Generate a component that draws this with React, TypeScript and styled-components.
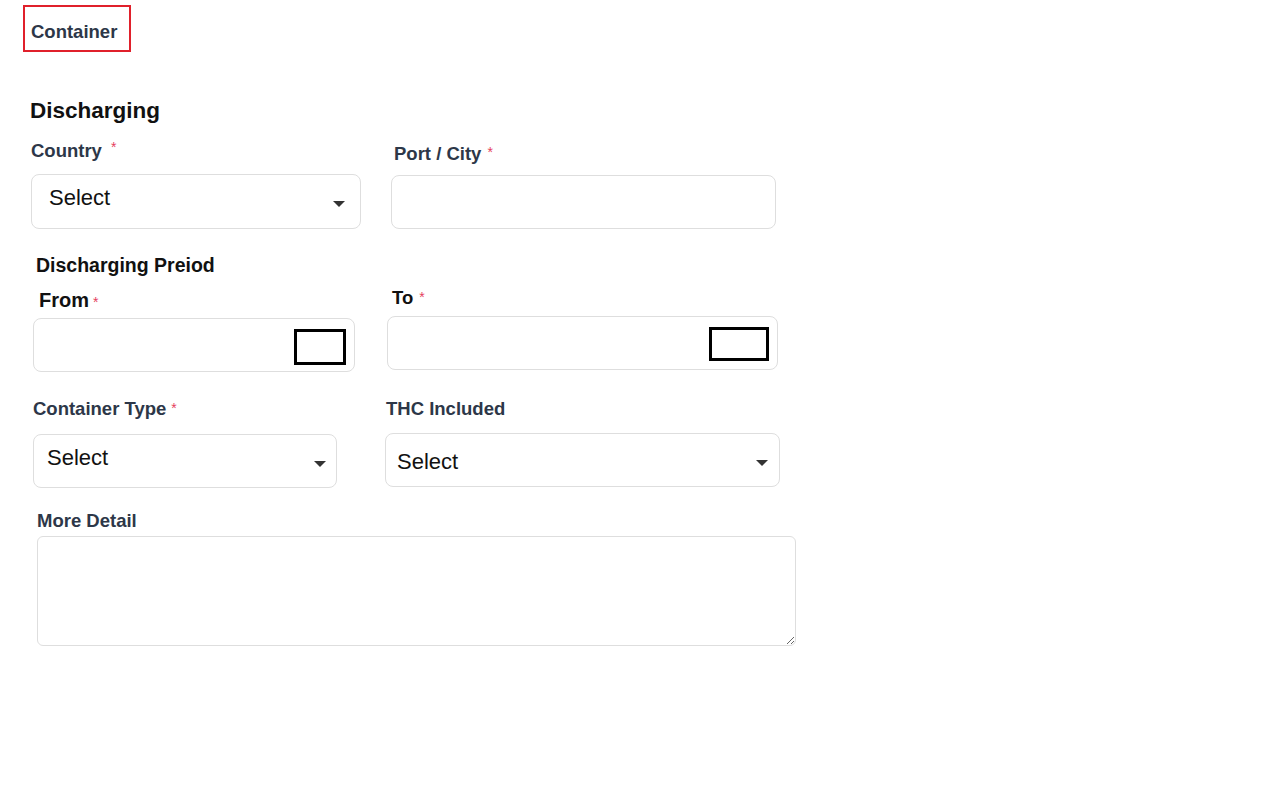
import React from "react";
import styled, { createGlobalStyle } from "styled-components";

const GlobalStyle = createGlobalStyle`
  html, body {
    margin: 0;
    padding: 0;
    background: #fff;
  }
  body {
    font-family: "Liberation Sans", Arial, sans-serif;
  }
  * {
    box-sizing: border-box;
  }
`;

const Page = styled.div`
  width: 1280px;
  min-height: 805px;
  padding-top: 5px;
`;

const Tab = styled.div`
  margin-left: 23px;
  width: 108px;
  height: 47px;
  border: 2px solid #e0202b;
  padding: 14px 0 0 6px;
  font-size: 18.5px;
  line-height: 21px;
  font-weight: 700;
  color: #2d3748;
`;

const Heading = styled.h2`
  margin: 46px 0 0 30px;
  font-size: 22.5px;
  line-height: 26px;
  font-weight: 700;
  color: #111;
`;

const SubHeading = styled.h3`
  margin: 25px 0 0 36px;
  font-size: 19.5px;
  line-height: 23px;
  font-weight: 700;
  color: #111;
`;

const Row = styled.div<{ $mt: number }>`
  display: flex;
  align-items: flex-start;
  margin-top: ${({ $mt }) => $mt}px;
`;

const Field = styled.div<{ $ml: number; $mt?: number; $w: number }>`
  display: flex;
  flex-direction: column;
  width: ${({ $w }) => $w}px;
  margin-left: ${({ $ml }) => $ml}px;
  margin-top: ${({ $mt }) => $mt || 0}px;
`;

const Label = styled.label<{ $indent?: number; $mb: number; $dark?: boolean; $size?: number }>`
  display: block;
  margin: 0 0 ${({ $mb }) => $mb}px ${({ $indent }) => $indent || 0}px;
  font-size: ${({ $size }) => $size || 18.5}px;
  line-height: ${({ $size }) => (($size || 18.5) > 19 ? 23 : 22)}px;
  font-weight: 700;
  color: ${({ $dark }) => ($dark ? "#111" : "#2d3748")};
  white-space: nowrap;
`;

const Required = styled.span<{ $gap: number; $raise: number }>`
  margin-left: ${({ $gap }) => $gap}px;
  font-size: 14px;
  line-height: 0;
  font-weight: 400;
  color: #e53e5e;
  vertical-align: ${({ $raise }) => $raise}px;
`;

const Control = styled.div<{ $h: number }>`
  height: ${({ $h }) => $h}px;
  border: 1px solid #dedede;
  border-radius: 8px;
  background: #fff;
`;

const SelectBox = styled(Control)<{ $pt: number; $pl: number; $caretRight: number }>`
  position: relative;
  padding: ${({ $pt }) => $pt}px 0 0 ${({ $pl }) => $pl}px;
  font-size: 22px;
  line-height: 26px;
  color: #111;

  &::after {
    content: "";
    position: absolute;
    top: 26px;
    right: ${({ $caretRight }) => $caretRight - 1}px;
    border-left: 6.5px solid transparent;
    border-right: 6.5px solid transparent;
    border-top: 6px solid #333;
  }
`;

const DateBox = styled(Control)`
  display: flex;
  justify-content: flex-end;
  align-items: flex-start;
  padding: 10px 8px 0 0;
`;

const DateIcon = styled.span<{ $w: number; $h: number }>`
  display: block;
  width: ${({ $w }) => $w}px;
  height: ${({ $h }) => $h}px;
  border: 3px solid #000;
`;

const TextArea = styled.textarea`
  display: block;
  width: 759px;
  height: 110px;
  border: 1px solid #dedede;
  border-radius: 6px;
  font-family: "Liberation Sans", Arial, sans-serif;
  font-size: 16px;
  outline: none;
`;

function Req({ gap, raise }: { gap: number; raise: number }) {
  return (
    <Required $gap={gap} $raise={raise}>
      *
    </Required>
  );
}

export default function App() {
  return (
    <>
      <GlobalStyle />
      <Page>
        <Tab>Container</Tab>
        <Heading>Discharging</Heading>

        <Row $mt={16}>
          <Field $ml={31} $w={330}>
            <Label $mb={12}>
              Country
              <Req gap={9} raise={5} />
            </Label>
            <SelectBox $h={55} $pt={10} $pl={17} $caretRight={16}>
              Select
            </SelectBox>
          </Field>
          <Field $ml={30} $mt={3} $w={385}>
            <Label $indent={3} $mb={10}>
              Port / City
              <Req gap={6} raise={3} />
            </Label>
            <Control $h={54} />
          </Field>
        </Row>

        <SubHeading>Discharging Preiod</SubHeading>

        <Row $mt={0}>
          <Field $ml={33} $mt={12} $w={322}>
            <Label $indent={6} $mb={6} $dark $size={20}>
              From
              <Req gap={4} raise={0} />
            </Label>
            <DateBox $h={54}>
              <DateIcon $w={52} $h={36} />
            </DateBox>
          </Field>
          <Field $ml={32} $mt={10} $w={391}>
            <Label $indent={5} $mb={7} $dark>
              To
              <Req gap={6} raise={2} />
            </Label>
            <DateBox $h={54}>
              <DateIcon $w={60} $h={34} />
            </DateBox>
          </Field>
        </Row>

        <Row $mt={26}>
          <Field $ml={33} $w={304}>
            <Label $mb={14}>
              Container Type
              <Req gap={5} raise={2} />
            </Label>
            <SelectBox $h={54} $pt={10} $pl={13} $caretRight={11}>
              Select
            </SelectBox>
          </Field>
          <Field $ml={48} $w={395}>
            <Label $indent={1} $mb={13}>
              THC Included
            </Label>
            <SelectBox $h={54} $pt={15} $pl={11} $caretRight={12}>
              Select
            </SelectBox>
          </Field>
        </Row>

        <Row $mt={22}>
          <Field $ml={37} $w={759}>
            <Label $mb={4}>More Detail</Label>
            <TextArea />
          </Field>
        </Row>
      </Page>
    </>
  );
}
